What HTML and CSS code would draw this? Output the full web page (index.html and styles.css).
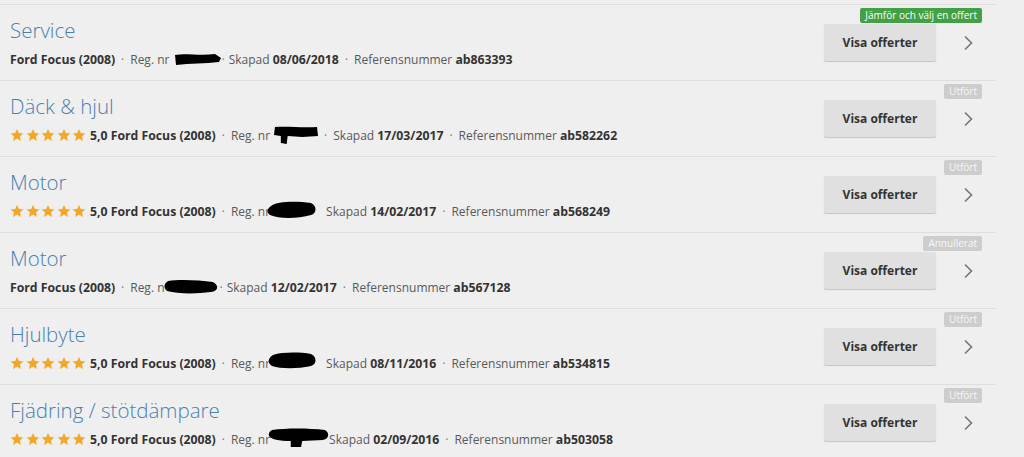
FILE: index.html
```html
<!DOCTYPE html>
<html lang="sv">
<head>
<meta charset="utf-8">
<title>Förfrågningar</title>
<link rel="stylesheet" href="styles.css">
</head>
<body>
<svg width="0" height="0" class="defs">
  <defs>
    <symbol id="star" viewBox="0 0 24 24"><path d="M12 1.5l3.1 7.2 7.8.7-5.9 5.2 1.8 7.7L12 18.2l-6.8 4.1 1.8-7.7L1.1 9.4l7.8-.7z"/></symbol>
    <symbol id="chev" viewBox="0 0 10 16"><path d="M2 1.5l6.5 6.5L2 14.5" fill="none" stroke="currentColor" stroke-width="1.6"/></symbol>
  </defs>
</svg>
<ul class="list">
  <li class="row">
    <div class="info">
      <h2 class="title">Service</h2>
      <p class="meta"><b>Ford Focus (2008)</b><span class="sep">·</span>Reg. nr <svg class="blob b1" viewBox="0 0 46 13" preserveAspectRatio="none"><path d="M0 2 C10 0 25 3 40 1 L46 5 L44 9 C30 11 15 10 1 12 Z"/></svg><span class="sep tight">·</span>Skapad <b>08/06/2018</b><span class="sep">·</span>Referensnummer <b>ab863393</b></p>
    </div>
    <button class="btn">Visa offerter</button>
    <svg class="chev"><use href="#chev"/></svg>
    <span class="badge green">Jämför och välj en offert</span>
  </li>
  <li class="row">
    <div class="info">
      <h2 class="title">Däck &amp; hjul</h2>
      <p class="meta"><span class="stars"><svg><use href="#star"/></svg><svg><use href="#star"/></svg><svg><use href="#star"/></svg><svg><use href="#star"/></svg><svg><use href="#star"/></svg></span><b>5,0 Ford Focus (2008)</b><span class="sep">·</span>Reg. nr<svg class="blob b2" viewBox="0 0 46 18" preserveAspectRatio="none"><path d="M2 1 C15 0 30 2 45 1 L46 10 L30 11 L15 10 L14 18 L8 17 L8 10 L1 9 Z"/></svg><span class="sep">·</span>Skapad <b>17/03/2017</b><span class="sep">·</span>Referensnummer <b>ab582262</b></p>
    </div>
    <button class="btn">Visa offerter</button>
    <svg class="chev"><use href="#chev"/></svg>
    <span class="badge grey">Utfört</span>
  </li>
  <li class="row">
    <div class="info">
      <h2 class="title">Motor</h2>
      <p class="meta"><span class="stars"><svg><use href="#star"/></svg><svg><use href="#star"/></svg><svg><use href="#star"/></svg><svg><use href="#star"/></svg><svg><use href="#star"/></svg></span><b>5,0 Ford Focus (2008)</b><span class="sep">·</span>Reg. nr<svg class="blob b3" viewBox="0 0 50 18" preserveAspectRatio="none"><path d="M4 5 C10 0 30 0 44 2 C50 5 50 12 44 14 C30 18 12 18 3 14 C-1 11 0 8 4 5 Z"/></svg>Skapad <b>14/02/2017</b><span class="sep">·</span>Referensnummer <b>ab568249</b></p>
    </div>
    <button class="btn">Visa offerter</button>
    <svg class="chev"><use href="#chev"/></svg>
    <span class="badge grey">Utfört</span>
  </li>
  <li class="row">
    <div class="info">
      <h2 class="title">Motor</h2>
      <p class="meta"><b>Ford Focus (2008)</b><span class="sep">·</span>Reg. n<svg class="blob b4" viewBox="0 0 54 15" preserveAspectRatio="none"><path d="M5 2 C15 0 35 1 48 3 C54 6 54 12 46 13 C32 15 14 15 4 12 C0 9 1 4 5 2 Z"/></svg><span class="sep tight">·</span>Skapad <b>12/02/2017</b><span class="sep">·</span>Referensnummer <b>ab567128</b></p>
    </div>
    <button class="btn">Visa offerter</button>
    <svg class="chev"><use href="#chev"/></svg>
    <span class="badge grey">Annullerat</span>
  </li>
  <li class="row">
    <div class="info">
      <h2 class="title">Hjulbyte</h2>
      <p class="meta"><span class="stars"><svg><use href="#star"/></svg><svg><use href="#star"/></svg><svg><use href="#star"/></svg><svg><use href="#star"/></svg><svg><use href="#star"/></svg></span><b>5,0 Ford Focus (2008)</b><span class="sep">·</span>Reg. nr<svg class="blob b5" viewBox="0 0 50 17" preserveAspectRatio="none"><path d="M6 3 C15 0 32 0 44 2 C50 5 50 12 44 14 C30 17 14 17 5 14 C0 11 1 6 6 3 Z"/></svg>Skapad <b>08/11/2016</b><span class="sep">·</span>Referensnummer <b>ab534815</b></p>
    </div>
    <button class="btn">Visa offerter</button>
    <svg class="chev"><use href="#chev"/></svg>
    <span class="badge grey">Utfört</span>
  </li>
  <li class="row">
    <div class="info">
      <h2 class="title">Fjädring / stötdämpare</h2>
      <p class="meta"><span class="stars"><svg><use href="#star"/></svg><svg><use href="#star"/></svg><svg><use href="#star"/></svg><svg><use href="#star"/></svg><svg><use href="#star"/></svg></span><b>5,0 Ford Focus (2008)</b><span class="sep">·</span>Reg. nr<svg class="blob b6" viewBox="0 0 60 19" preserveAspectRatio="none"><path d="M5 2 C18 0 40 0 56 2 C61 5 60 11 54 12 L34 13 L33 19 L23 19 L23 13 C12 13 3 11 2 8 C1 5 3 3 5 2 Z"/></svg>Skapad <b>02/09/2016</b><span class="sep">·</span>Referensnummer <b>ab503058</b></p>
    </div>
    <button class="btn">Visa offerter</button>
    <svg class="chev"><use href="#chev"/></svg>
    <span class="badge grey">Utfört</span>
  </li>
</ul>
</body>
</html>
```
FILE: styles.css
```css
html, body {
  margin: 0;
  padding: 0;
  background: #efefef;
}
body {
  padding-top: 4px;
  font-family: "Open Sans", "Liberation Sans", sans-serif;
  color: #555;
}
.defs { position: absolute; }
.list {
  list-style: none;
  margin: 0;
  padding: 0;
  width: 995px;
}
.row {
  position: relative;
  display: flex;
  align-items: center;
  height: 75px;
  border-top: 1px solid #dedede;
  padding-left: 10px;
}
.info {
  flex: 1;
  min-width: 0;
}
.title {
  margin: 0 0 8px;
  font-size: 20.5px;
  line-height: 26px;
  font-weight: 300;
  color: #4a80b2;
}
.meta {
  margin: 0;
  height: 18px;
  font-size: 12px;
  line-height: 18px;
  color: #595959;
  white-space: nowrap;
}
.meta b {
  color: #333;
  font-weight: 700;
  font-size: 12.25px;
}
.sep {
  margin: 0 6px;
  color: #777;
}
.sep.tight { margin: 0 4px 0 1px; }
.stars {
  display: inline-block;
  margin-right: 4px;
  margin-left: 0;
  vertical-align: top;
  height: 18px;
}
.stars svg {
  width: 14px;
  height: 14px;
  margin-right: 1.5px;
  vertical-align: -2px;
  fill: #f6a623;
}
.stars svg:last-child { margin-right: 0; }
.blob {
  fill: #000;
  margin-top: -10px;
}
.b1 { width: 46px; height: 13px; margin-left: 2px; vertical-align: -2px; }
.b2 { width: 45px; height: 18px; margin-left: 3px; vertical-align: -4px; }
.b3 { width: 50px; height: 18px; margin-left: -3px; margin-right: 9px; vertical-align: -3px; }
.b4 { width: 56px; height: 15px; margin-left: -2px; vertical-align: -2px; }
.b5 { width: 50px; height: 17px; margin-left: -3px; margin-right: 9px; vertical-align: -1px; }
.b6 { width: 62px; height: 19px; margin-left: -3px; margin-right: 0; vertical-align: -3px; }
.btn {
  flex: none;
  width: 112px;
  height: 37px;
  border: 0;
  border-radius: 2px;
  background: #e0e0e0;
  box-shadow: 0 1px 1px rgba(0,0,0,0.18);
  font-family: inherit;
  font-size: 12px;
  font-weight: 700;
  color: #333;
  padding: 0;
}
.chev {
  flex: none;
  width: 10px;
  height: 16px;
  margin: 0 22px 0 27px;
  color: #777;
}
.badge {
  position: absolute;
  top: 3px;
  right: 13px;
  height: 15px;
  line-height: 15px;
  padding: 0 5px;
  border-radius: 2px;
  font-size: 10px;
  color: #fff;
}
.badge.green { background: #42a047; }
.badge.grey { background: #cdcdcd; color: #f7f7f7; }
```
